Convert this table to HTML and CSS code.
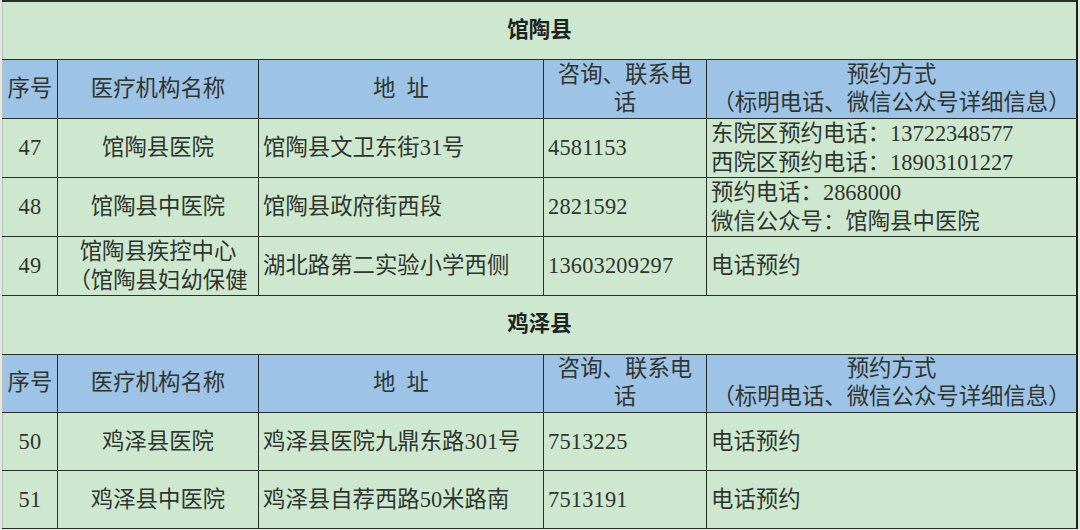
FILE: index.html
```html
<!DOCTYPE html>
<html lang="zh-CN">
<head>
<meta charset="utf-8">
<title>预约方式</title>
<link rel="stylesheet" href="styles.css">
</head>
<body>
<table class="sheet">
  <colgroup>
    <col class="c-no">
    <col class="c-name">
    <col class="c-addr">
    <col class="c-tel">
    <col class="c-way">
  </colgroup>
  <tbody>
    <tr class="title t1"><td colspan="5">馆陶县</td></tr>
    <tr class="head h1">
      <td class="center">序号</td>
      <td class="center">医疗机构名称</td>
      <td class="center">地&nbsp;&nbsp;址</td>
      <td class="center">咨询、联系电<br>话</td>
      <td class="center">预约方式<br>（标明电话、微信公众号详细信息）</td>
    </tr>
    <tr class="r47">
      <td class="center num">47</td>
      <td class="center">馆陶县医院</td>
      <td>馆陶县文卫东街31号</td>
      <td class="num">4581153</td>
      <td>东院区预约电话：13722348577<br>西院区预约电话：18903101227</td>
    </tr>
    <tr class="r48">
      <td class="center num">48</td>
      <td class="center">馆陶县中医院</td>
      <td>馆陶县政府街西段</td>
      <td class="num">2821592</td>
      <td>预约电话：2868000<br>微信公众号：馆陶县中医院</td>
    </tr>
    <tr class="r49">
      <td class="center num">49</td>
      <td class="center">馆陶县疾控中心<br>（馆陶县妇幼保健</td>
      <td>湖北路第二实验小学西侧</td>
      <td class="num">13603209297</td>
      <td>电话预约</td>
    </tr>
    <tr class="title t2"><td colspan="5">鸡泽县</td></tr>
    <tr class="head h2">
      <td class="center">序号</td>
      <td class="center">医疗机构名称</td>
      <td class="center">地&nbsp;&nbsp;址</td>
      <td class="center">咨询、联系电<br>话</td>
      <td class="center">预约方式<br>（标明电话、微信公众号详细信息）</td>
    </tr>
    <tr class="r50">
      <td class="center num">50</td>
      <td class="center">鸡泽县医院</td>
      <td>鸡泽县医院九鼎东路301号</td>
      <td class="num">7513225</td>
      <td>电话预约</td>
    </tr>
    <tr class="r51">
      <td class="center num">51</td>
      <td class="center">鸡泽县中医院</td>
      <td>鸡泽县自荐西路50米路南</td>
      <td class="num">7513191</td>
      <td>电话预约</td>
    </tr>
  </tbody>
</table>
</body>
</html>
```

FILE: styles.css
```css
html, body {
  margin: 0;
  padding: 0;
  background: #e4e8e4;
}

.sheet {
  margin-left: 2px;
  width: 1076px;
  table-layout: fixed;
  border-collapse: collapse;
  background: #cde8cf;
  border-left: 1px solid #b9c4b9;
  border-right: 2px solid #1c241c;
  font-family: "Liberation Serif", "Noto Sans CJK SC", serif;
  font-size: 22.4px;
  color: #30352f;
  line-height: 29px;
}

.c-no { width: 55px; }
.c-name { width: 201px; }
.c-addr { width: 285px; }
.c-tel { width: 163px; }
.c-way { width: auto; }

.sheet td {
  border: 1px solid #263026;
  padding: 0 4px;
  vertical-align: middle;
  white-space: nowrap;
  overflow: hidden;
}

.sheet tr:first-child td {
  border-top: 2px solid #263026;
}

.sheet td:first-child {
  border-left: 1px solid #b9c4b9;
}

.sheet td:last-child {
  border-right: 2px solid #1c241c;
}

.sheet td.center {
  text-align: center;
  padding: 0;
}

.num {
  letter-spacing: 0.2px;
}

.title td {
  text-align: center;
  font-weight: bold;
  font-size: 21.5px;
  color: #1f231f;
}

.head td {
  background: #9dc3e6;
  line-height: 28px;
}

.t1 { height: 58px; }
.h1 { height: 59px; }
.r47 { height: 58px; }
.r48 { height: 59px; }
.r49 { height: 58px; }
.t2 { height: 59px; }
.h2 { height: 58px; }
.r50 { height: 58px; }
.r51 { height: 58px; }
```
